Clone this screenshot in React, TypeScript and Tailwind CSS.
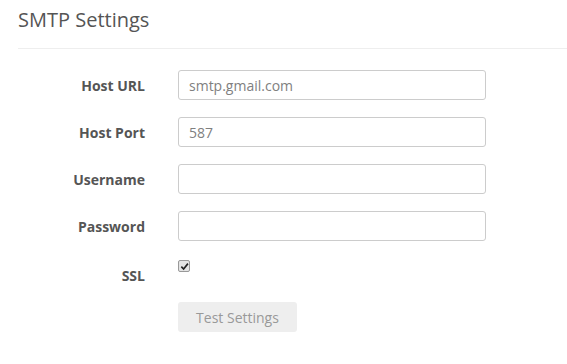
export default function App() {
  const fields = [
    { label: "Host URL", value: "smtp.gmail.com" },
    { label: "Host Port", value: "587" },
    { label: "Username", value: "" },
    { label: "Password", value: "" },
  ];
  return (
    <div className="w-[567px] h-[364px] bg-white pl-[18px] font-['Open_Sans',sans-serif] text-[#555]">
      <h2 className="pt-[5px] text-[20px] leading-[30px] text-[#555]">SMTP Settings</h2>
      <hr className="mt-[13px] border-t border-[#eee]" />

      <form className="mt-[21px] flex flex-col gap-[17px]">
        {fields.map((f) => (
          <div key={f.label} className="flex items-center">
            <label className="w-[127px] text-right text-[14px] font-bold text-[#555]">{f.label}</label>
            <input
              readOnly
              value={f.value}
              className="ml-[33px] h-[30px] w-[308px] rounded-[3px] border border-[#ccc] px-[10px] text-[14px] text-[#808080] outline-none"
            />
          </div>
        ))}

        {/* SSL */}
        <div className="flex items-start">
          <label className="w-[127px] pt-[7px] text-right text-[14px] font-bold text-[#555]">SSL</label>
          <div className="ml-[33px] pt-[2px]">
            <span className="flex h-[12px] w-[12px] items-center justify-center rounded-[2px] border border-[#999] bg-[#e4e4e4]">
              <svg viewBox="0 0 10 10" className="h-[9px] w-[9px]">
                <path d="M1.5 5.2 L4 7.8 L8.8 1.8" fill="none" stroke="#222" strokeWidth="1.8" />
              </svg>
            </span>
          </div>
        </div>

        <div className="ml-[160px] -mt-[1px]">
          <button
            type="button"
            className="h-[30px] w-[119px] rounded-[3px] bg-[#eee] text-[14px] text-[#999]"
          >
            Test Settings
          </button>
        </div>
      </form>
    </div>
  );
}
